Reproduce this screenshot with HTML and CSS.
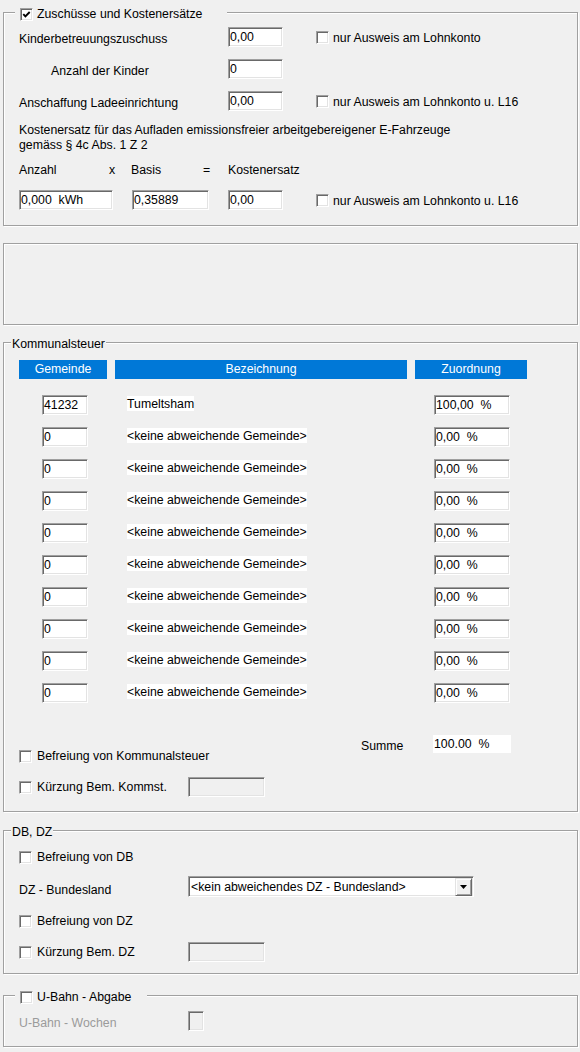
FILE: index.html
```html
<!DOCTYPE html>
<html lang="de">
<head>
<meta charset="utf-8">
<title>Zuschüsse</title>
<link rel="stylesheet" href="styles.css">
</head>
<body>
<div class="page">

  <section class="group g1">
    <div class="legend lg-check lg1"><span class="cb"><svg viewBox="0 0 9 9" width="9" height="9"><polyline points="1.3,4.2 3.4,6.4 7.7,2" fill="none" stroke="#000" stroke-width="1.9"/></svg></span><span class="cbl">Zuschüsse und Kostenersätze</span></div>
    <div class="row r1"><span class="lbl w209">Kinderbetreuungszuschuss</span><span class="inp w55">0,00</span><span class="cb ml33"></span><span class="cbl">nur Ausweis am Lohnkonto</span></div>
    <div class="row r2"><span class="lbl w209 ind">Anzahl der Kinder</span><span class="inp w55">0</span></div>
    <div class="row r2"><span class="lbl w209">Anschaffung Ladeeinrichtung</span><span class="inp w55">0,00</span><span class="cb ml33"></span><span class="cbl">nur Ausweis am Lohnkonto u. L16</span></div>
    <p class="info">Kostenersatz für das Aufladen emissionsfreier arbeitgebereigener E-Fahrzeuge<br>gemäss § 4c Abs. 1 Z 2</p>
    <div class="calc-head"><span class="ch1">Anzahl</span><span class="ch2">x</span><span class="ch3">Basis</span><span class="ch4">=</span><span>Kostenersatz</span></div>
    <div class="row calc"><span class="inp w94 pre">0,000  kWh</span><span class="inp w77 ml19">0,35889</span><span class="inp w55 ml19">0,00</span><span class="cb ml33"></span><span class="cbl">nur Ausweis am Lohnkonto u. L16</span></div>
  </section>

  <section class="group g2"></section>

  <section class="group g3">
    <div class="legend lg-text">Kommunalsteuer</div>
    <div class="ks-head"><span>Gemeinde</span><span>Bezeichnung</span><span>Zuordnung</span></div>
    <div class="ks-row first"><span class="inp gem">41232</span><span class="ks-name">Tumeltsham</span><span class="inp pct pre">100,00  %</span></div>
    <div class="ks-row"><span class="inp gem">0</span><span class="ks-name">&lt;keine abweichende Gemeinde&gt;</span><span class="inp pct pre">0,00  %</span></div>
    <div class="ks-row"><span class="inp gem">0</span><span class="ks-name">&lt;keine abweichende Gemeinde&gt;</span><span class="inp pct pre">0,00  %</span></div>
    <div class="ks-row"><span class="inp gem">0</span><span class="ks-name">&lt;keine abweichende Gemeinde&gt;</span><span class="inp pct pre">0,00  %</span></div>
    <div class="ks-row"><span class="inp gem">0</span><span class="ks-name">&lt;keine abweichende Gemeinde&gt;</span><span class="inp pct pre">0,00  %</span></div>
    <div class="ks-row"><span class="inp gem">0</span><span class="ks-name">&lt;keine abweichende Gemeinde&gt;</span><span class="inp pct pre">0,00  %</span></div>
    <div class="ks-row"><span class="inp gem">0</span><span class="ks-name">&lt;keine abweichende Gemeinde&gt;</span><span class="inp pct pre">0,00  %</span></div>
    <div class="ks-row"><span class="inp gem">0</span><span class="ks-name">&lt;keine abweichende Gemeinde&gt;</span><span class="inp pct pre">0,00  %</span></div>
    <div class="ks-row"><span class="inp gem">0</span><span class="ks-name">&lt;keine abweichende Gemeinde&gt;</span><span class="inp pct pre">0,00  %</span></div>
    <div class="ks-row"><span class="inp gem">0</span><span class="ks-name">&lt;keine abweichende Gemeinde&gt;</span><span class="inp pct pre">0,00  %</span></div>
    <div class="ks-bottom">
      <div class="ks-left">
        <div class="row ck-row"><span class="cb"></span><span class="cbl">Befreiung von Kommunalsteuer</span></div>
        <div class="row ck-row"><span class="cb"></span><span class="cbl ck-w">Kürzung Bem. Kommst.</span><span class="inp w77 dis"></span></div>
      </div>
      <span class="summe-lbl">Summe</span>
      <span class="summe-box pre">100.00  %</span>
    </div>
  </section>

  <section class="group g4">
    <div class="legend lg-text">DB, DZ</div>
    <div class="row db1"><span class="cb"></span><span class="cbl">Befreiung von DB</span></div>
    <div class="row db2"><span class="lbl w169">DZ - Bundesland</span><span class="select"><span class="sel-text">&lt;kein abweichendes DZ - Bundesland&gt;</span><span class="sel-btn"><svg viewBox="0 0 7 4" width="7" height="4"><polygon points="0,0 7,0 3.5,4" fill="#000"/></svg></span></span></div>
    <div class="row db3"><span class="cb"></span><span class="cbl">Befreiung von DZ</span></div>
    <div class="row db4"><span class="cb"></span><span class="cbl ck-w">Kürzung Bem. DZ</span><span class="inp w77 dis"></span></div>
  </section>

  <section class="group g5">
    <div class="legend lg-check lg5"><span class="cb"></span><span class="cbl">U-Bahn - Abgabe</span></div>
    <div class="row ub"><span class="lbl w169 gray">U-Bahn - Wochen</span><span class="inp w16 dis"></span></div>
  </section>

</div>
</body>
</html>
```

FILE: styles.css
```css
* { box-sizing: border-box; }

html, body {
  margin: 0;
  padding: 0;
  background: #f0f0f0;
}

body {
  font-family: "Liberation Sans", Arial, sans-serif;
  font-size: 12.3px;
  color: #000;
  width: 580px;
  height: 1052px;
  overflow: hidden;
}

.page {
  padding: 12px 0 0 3px;
}

/* group boxes */
.group {
  width: 575px;
  border: 1px solid #a0a0a0;
  box-shadow: inset 1px 1px 0 #fff, 1px 1px 0 #fff;
  padding: 0 0 0 15px;
}

.g1 { padding-bottom: 15px; }
.g2 { margin-top: 17px; height: 82px; }
.g3 { margin-top: 17px; padding-bottom: 14px; }
.g4 { margin-top: 18px; padding-bottom: 11px; }
.g5 { margin-top: 21px; padding-bottom: 15px; }

.legend {
  display: flex;
  align-items: center;
  height: 16px;
  margin-top: -8px;
  padding-top: 2px;
  line-height: 14px;
  background: #f0f0f0;
  width: fit-content;
}

.lg-text {
  margin-left: -8px;
  padding-left: 1px;
  padding-right: 1px;
}

.lg-check {
  margin-left: -4px;
  padding-left: 5px;
}

.lg1 { width: 212px; }
.lg5 { width: 132px; }

/* rows */
.row {
  display: flex;
  align-items: center;
  height: 20px;
}

.r1 { margin-top: 6px; }
.r2 { margin-top: 12px; }

.lbl {
  flex: none;
  line-height: 14px;
  margin-top: 3px;
}

.db2 .lbl { margin-top: 6px; }

.w209 { width: 209px; }
.w169 { width: 169px; }
.ind { padding-left: 32px; }
.gray { color: #9b9b9b; }

.info {
  margin: 12px 0 0;
  line-height: 15px;
}

.calc-head {
  display: flex;
  margin-top: 10px;
  line-height: 14px;
}

.ch1 { width: 90px; }
.ch2 { width: 22px; }
.ch3 { width: 72px; }
.ch4 { width: 25px; }

.calc { margin-top: 13px; }

/* text boxes */
.inp {
  flex: none;
  display: block;
  height: 20px;
  line-height: 18px;
  padding-left: 1px;
  background: #fff;
  border: 1px solid;
  border-color: #a0a0a0 #fff #fff #a0a0a0;
  box-shadow: inset 1px 1px 0 #696969, inset -1px -1px 0 #e3e3e3;
  white-space: nowrap;
  overflow: hidden;
}

.inp.dis { background: #f0f0f0; }

.pre { white-space: pre; }

.w16 { width: 16px; }
.w55 { width: 55px; }
.w77 { width: 77px; }
.w94 { width: 94px; }
.ml19 { margin-left: 19px; }
.ml33 { margin-left: 33px; }

/* checkboxes */
.cb {
  flex: none;
  display: flex;
  align-items: center;
  justify-content: center;
  width: 13px;
  height: 13px;
  background: #fff;
  border: 1px solid;
  border-color: #a0a0a0 #fff #fff #a0a0a0;
  box-shadow: inset 1px 1px 0 #696969, inset -1px -1px 0 #e3e3e3;
}

.cb svg { display: block; }

.cbl {
  flex: none;
  margin-left: 4px;
  line-height: 14px;
}

.row .cbl { margin-left: 5px; }
.g1 .row .cbl { margin-left: 4px; margin-top: 2px; }
.ck-w { width: 151px; }

/* Kommunalsteuer table */
.ks-head {
  display: grid;
  grid-template-columns: 88px 292px 112px;
  column-gap: 8px;
  margin-top: 9px;
}

.ks-head span {
  height: 19px;
  line-height: 19px;
  text-align: center;
  background: #0078d7;
  color: #fff;
}

.ks-row {
  display: grid;
  grid-template-columns: 108px 307px 76px;
  height: 20px;
  margin-top: 12px;
}

.ks-row.first { margin-top: 16px; }

.inp.gem {
  width: 46px;
  margin-left: 23px;
}

.inp.pct { width: 76px; }

.ks-name {
  justify-self: start;
  align-self: start;
  margin-top: 1px;
  padding-top: 1px;
  background: #fff;
  line-height: 14px;
  white-space: nowrap;
}

.ks-bottom {
  display: flex;
  align-items: flex-start;
  margin-top: 32px;
}

.ks-left {
  width: 342px;
}

.ck-row { margin-top: 11px; }

.summe-lbl {
  width: 72px;
  line-height: 20px;
  margin-top: 1px;
}

.summe-box {
  width: 78px;
  height: 18px;
  line-height: 18px;
  padding-left: 1px;
  background: #fff;
}

/* DB, DZ */
.db1 { margin-top: 8px; }
.db2 { margin-top: 9px; height: 21px; }
.db3 { margin-top: 14px; }
.db4 { margin-top: 11px; }

.select {
  flex: none;
  display: flex;
  align-items: center;
  width: 286px;
  height: 21px;
  background: #fff;
  border: 1px solid;
  border-color: #a0a0a0 #fff #fff #a0a0a0;
  box-shadow: inset 1px 1px 0 #696969, inset -1px -1px 0 #e3e3e3;
  padding: 1px 1px 1px 2px;
}

.sel-text {
  flex: 1;
  line-height: 17px;
  padding-top: 1px;
  white-space: nowrap;
}

.sel-btn {
  flex: none;
  display: flex;
  align-items: center;
  justify-content: center;
  width: 17px;
  height: 18px;
  background: #f0f0f0;
  border: 1px solid;
  border-color: #e3e3e3 #696969 #696969 #e3e3e3;
  box-shadow: inset 1px 1px 0 #fff, inset -1px -1px 0 #a0a0a0;
}

.sel-btn svg { display: block; }

/* U-Bahn */
.ub { margin-top: 7px; }
```
